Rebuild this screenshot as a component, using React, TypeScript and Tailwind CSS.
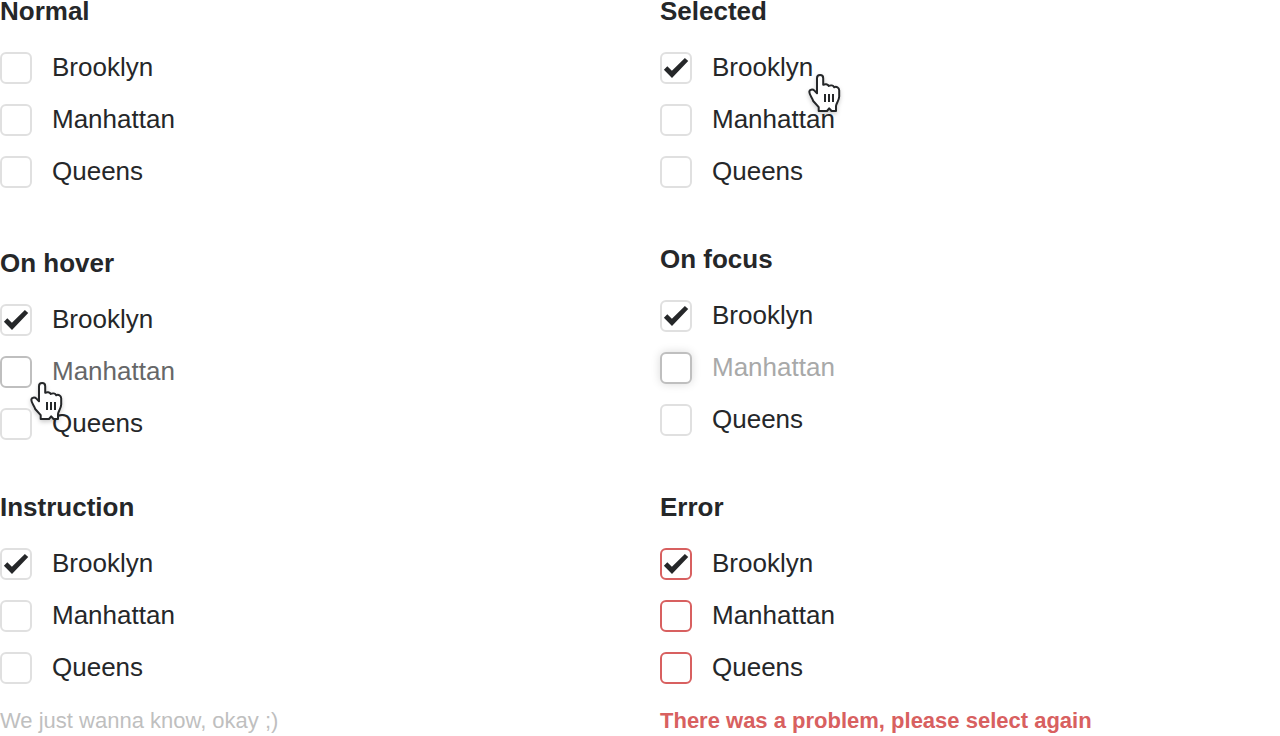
import { useId } from "react";
import type { ReactNode } from "react";

type Tone = "normal" | "hover" | "focus" | "error";

const boxTone: Record<Tone, string> = {
  normal: "border-[#e0e0e0]",
  hover: "border-[#bfbfbf]",
  focus: "border-[#bfbfbf] shadow-[0_0_10px_rgba(0,0,0,0.15)]",
  error: "border-[#d86060]",
};

const textTone: Record<Tone, string> = {
  normal: "text-[#252729]",
  hover: "text-[#666768]",
  focus: "text-[#a8a9a9]",
  error: "text-[#252729]",
};

function Option({ label, checked = false, tone = "normal" }: { label: string; checked?: boolean; tone?: Tone }) {
  return (
    <label className="flex cursor-pointer items-start gap-5">
      <span className="grid size-8 shrink-0">
        <input
          type="checkbox"
          defaultChecked={checked}
          className={`peer col-start-1 row-start-1 size-8 cursor-pointer appearance-none rounded-[6px] border-2 bg-white outline-none ${boxTone[tone]}`}
        />
        <svg
          viewBox="0 0 32 32"
          aria-hidden="true"
          className="pointer-events-none invisible col-start-1 row-start-1 size-8 peer-checked:visible"
        >
          <path d="M3.9 17.7 7.3 14.2 11.9 18.7 24.9 5.9 28.2 9.1 12 25.9Z" fill="#252729" />
        </svg>
      </span>
      <span className={`text-[26px] leading-[30px] ${textTone[tone]}`}>{label}</span>
    </label>
  );
}

function Pointer({ className }: { className: string }) {
  return (
    <svg
      viewBox="0 0 40 48"
      aria-hidden="true"
      className={`pointer-events-none absolute h-12 w-10 drop-shadow-[0_2px_2px_rgba(0,0,0,0.2)] ${className}`}
    >
      <path
        d="M10.7 38V34.2L5.2 28C4.6 25.2 1.3 22 1.3 18.8 1.3 16.6 4.6 15.8 6.4 17.6L9 20.2V5.2C9 1 15.2 1 15.2 5.2V11.8C17 10.7 19.7 11 20.8 12.9 22.7 12 25.2 12.4 26.2 14.2 28.5 13.3 31 14.3 31.2 17.2V23.5C31 28 28.3 29.8 28 33V38H23.5L21.2 35.3 19 38Z"
        fill="#fff"
        stroke="#252729"
        strokeWidth="2"
        strokeLinejoin="round"
      />
      <path d="M17 21V29M21 21V29M25 21V29" stroke="#252729" strokeWidth="2" />
    </svg>
  );
}

function Group({ title, children }: { title: string; children: ReactNode }) {
  const id = useId();
  return (
    <section role="group" aria-labelledby={id} className="relative">
      <h2 id={id} className="mb-[30px] text-[26px] leading-[22px] font-bold">
        {title}
      </h2>
      <div className="flex flex-col items-start gap-5">{children}</div>
    </section>
  );
}

export default function App() {
  return (
    <main className="grid grid-cols-2 gap-10 bg-white font-['Liberation_Sans',Arial,sans-serif] text-[#252729]">
      <div className="flex flex-col">
        <Group title="Normal">
          <Option label="Brooklyn" />
          <Option label="Manhattan" />
          <Option label="Queens" />
        </Group>
        <div className="mt-16">
          <Group title="On hover">
            <Option label="Brooklyn" checked />
            <Option label="Manhattan" tone="hover" />
            <Option label="Queens" />
            <Pointer className="top-[129px] left-[30px]" />
          </Group>
        </div>
        <div className="mt-14">
          <Group title="Instruction">
            <Option label="Brooklyn" checked />
            <Option label="Manhattan" />
            <Option label="Queens" />
          </Group>
        </div>
        <p className="mt-6 text-[22px] leading-[26px] text-[#bfbfbf]">We just wanna know, okay ;)</p>
      </div>
      <div className="flex flex-col gap-[60px]">
        <Group title="Selected">
          <Option label="Brooklyn" checked />
          <Option label="Manhattan" />
          <Option label="Queens" />
          <Pointer className="top-[73px] left-[148px]" />
        </Group>
        <Group title="On focus">
          <Option label="Brooklyn" checked />
          <Option label="Manhattan" tone="focus" />
          <Option label="Queens" />
        </Group>
        <div>
          <Group title="Error">
            <Option label="Brooklyn" checked tone="error" />
            <Option label="Manhattan" tone="error" />
            <Option label="Queens" tone="error" />
          </Group>
          <p role="alert" className="mt-6 text-[22px] leading-[26px] font-bold text-[#d86060]">
            There was a problem, please select again
          </p>
        </div>
      </div>
    </main>
  );
}
